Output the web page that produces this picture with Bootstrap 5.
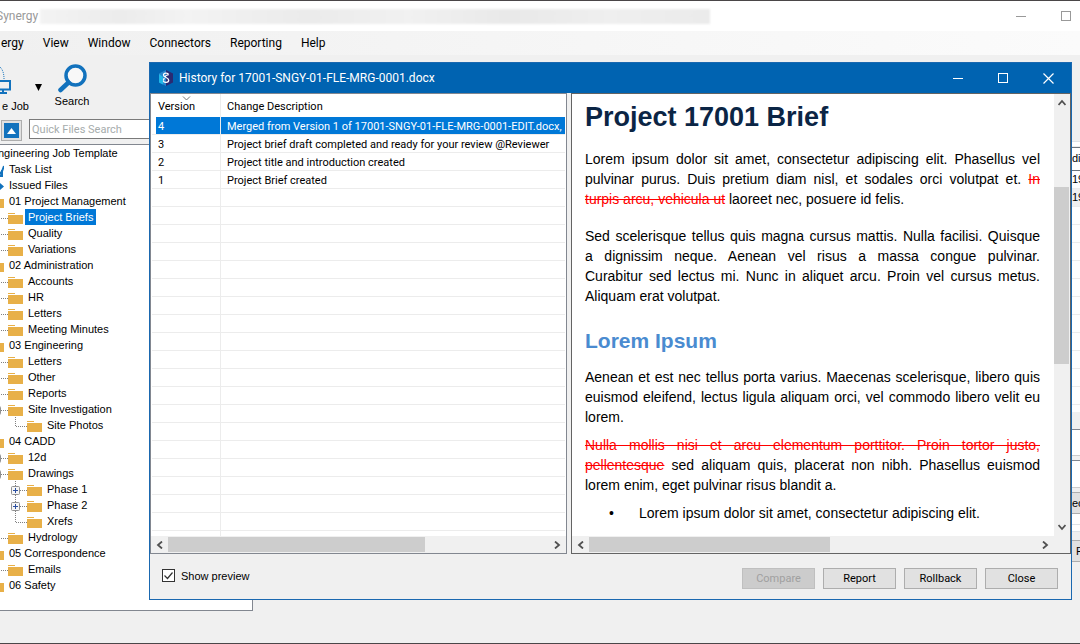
<!DOCTYPE html>
<html lang="en">
<head>
<meta charset="utf-8">
<meta name="viewport" content="width=device-width, initial-scale=1">
<title>Synergy - Document history</title>
<link href="https://cdn.jsdelivr.net/npm/bootstrap@5.3.0/dist/css/bootstrap.min.css" rel="stylesheet">
<style>
  :root { --face: #f0f0f0; --edge: #828790; --accent: #0078d7; --thumb: #cdcdcd; }
  body { font: 11px/16px Roboto, "Liberation Sans", sans-serif; color: #000; background: var(--face); }
  svg { display: block; flex: none; }
  button { font: inherit; color: inherit; border: 0; background: none; padding: 0; }
  .ui-font { font-family: Roboto, "Open Sans", sans-serif; font-size: 12px; }
  .arial-like { font-family: "Liberation Sans", Arial, sans-serif; }
  .app-window { height: 100vh; border-top: 1px solid #4a4648; border-bottom: 1px solid #4a4648; }

  .app-title { height: 30px; background: #fff; color: #999; }
  .app-name { margin-left: -4px; }
  .app-captions { margin-right: -9px; }
  .redacted { flex: 0 1 670px; height: 15px; margin-left: 2px; filter: blur(1px);
    background: linear-gradient(90deg, #f3f3f3, #ececec 12%, #f3f3f3 22%, #ebebeb 40%, #f1f1f1 55%, #e9e9e9 70%, #efefef 85%, #ebebeb); }
  .caption-btn { width: 45px; height: 30px; }
  .app-menu { height: 24px; gap: 19px; padding-left: 1px; background: linear-gradient(90deg, #f0f0f0, #fbfbfb); }
  .app-menu a { color: #000; text-decoration: none; }

  .tools { height: 64px; }
  .tool-job { width: 30px; padding-top: 11px; }
  .tool-job span { padding-left: 2px; }
  .tool-drop { width: 16px; }
  .tool-search { width: 52px; padding-top: 9px; }
  .quick { height: 25px; padding-left: 1px; gap: 7px; }
  .up-btn { width: 21px; height: 21px; margin-top: 1px; border: 1px solid #adadad; background: #e1e1e1; }
  .quick input { width: 222px; height: 20px; border: 1px solid #7a7a7a; padding: 0 2px; background: #fff; }
  .quick input::placeholder { color: #a6acac; opacity: 1; }

  .side { flex: 0 0 253px; padding-bottom: 32px; }
  .tree { background: #fff; border: 1px solid var(--edge); border-left: 0; overflow: hidden; }
  .tree ul { list-style: none; margin: 0; padding: 0; }
  .tree > ul { margin-left: -11px; }
  .tree ul ul ul ul { padding-left: 19px; }
  .tree-row { height: 16px; display: flex; white-space: nowrap; }
  .tree-row > span { padding: 0 3px; margin-left: 2px; height: 16px; }
  .tree-row > .picked { background: var(--accent); color: #fff; }
  .tree-root { margin-left: 4px; }

  .strip { width: 8px; overflow: hidden; white-space: nowrap; }
  .strip .cell { height: 18px; flex: none; background: #fff; border-bottom: 1px solid #ececec; }
  .strip-box { background: #fff; border-top: 1px solid var(--edge); border-bottom: 1px solid #ccc; }
  .strip-btn { background: #e1e1e1; border-top: 1px solid #adadad; border-bottom: 1px solid #adadad; height: 22px; text-align: left; }

  .dialog { position: absolute; top: 62px; left: 149px; right: 8px; bottom: 44px; border: 1px solid #1a68b0; background: var(--face); }
  .dialog-title { height: 30px; gap: 5px; background: #0063b1; color: #fff; padding-left: 8px; }
  .panes { display: grid; grid-template-columns: 417fr 500fr; column-gap: 4px; flex: 1; min-height: 0; }
  .pane { border: 1px solid var(--edge); background: #fff; min-width: 0; min-height: 0; display: flex; flex-direction: column; }
  .list-area { flex: 1; overflow: hidden; margin: 0 1px;
    background: linear-gradient(#ececec, #ececec) 68px 0 / 1px 100% no-repeat,
      repeating-linear-gradient(#fff 0 17px, #ececec 17px 18px) 0 23px no-repeat; }
  .history { table-layout: fixed; width: 100%; border-collapse: separate; border-spacing: 0; }
  .history th { height: 23px; font-weight: 400; padding: 2px 0 0 6px; position: relative; line-height: 16px; }
  .history td { height: 18px; padding: 2px 0 0 6px; line-height: 15px; border-bottom: 1px solid #ececec; white-space: nowrap; overflow: hidden; }
  .history tr > :first-child { width: 69px; border-right: 1px solid #ececec; }
  .history .chosen td { color: #fff; background: var(--accent); background-clip: padding-box; }
  .history .chosen td:first-child { background: linear-gradient(90deg, #fff 4px, var(--accent) 4px) padding-box; }
  .sort-mark { position: absolute; left: 30px; top: 2px; }

  .bar-h { height: 17px; background: var(--face); display: flex; align-items: center; flex: none; }
  .bar-h button { width: 17px; height: 17px; display: grid; place-items: center; }
  .bar-h i { display: block; height: 15px; background: var(--thumb); }
  .bar-v { width: 16px; background: var(--face); display: flex; flex-direction: column; flex: none; }
  .bar-v button { height: 17px; display: grid; place-items: center; }
  .bar-v i { display: block; width: 15px; background: var(--thumb); }
  .list-thumb { width: 62%; } .doc-thumb-h { width: 50%; } .doc-thumb-v { height: 40%; margin-top: 76px; }

  .doc-pane { border-color: #646464; }
  .doc { flex: 1; overflow: hidden; padding: 7px 14px 0 13px; font-size: 14px; line-height: 20px; }
  .doc p { text-align: justify; margin: 0 0 8px; }
  .doc .wide-gap { margin-bottom: 17px; }
  .doc h1 { font-size: 27px; line-height: 32px; font-weight: 700; color: #0b2545; margin: 0 0 16px; }
  .doc h2 { font-size: 21px; line-height: 26px; font-weight: 700; color: #4a8bd0; margin: 22px 0 13px; }
  .doc del { color: #f00; text-decoration: line-through 1px #f00; }
  .doc ul { list-style: none; margin: 0; padding: 0; }
  .doc li { display: flex; }
  .doc li::before { content: "•"; flex: 0 0 54px; padding-left: 24px; }

  .dialog-foot { height: 45px; padding: 0 13px 2px 12px; }
  .tick { appearance: none; width: 13px; height: 13px; margin: 0 6px 0 0; border: 1px solid #333; background: #fff; }
  .tick:checked { background: #fff url("data:image/svg+xml,%3Csvg xmlns='http://www.w3.org/2000/svg' viewBox='0 0 11 11'%3E%3Cpath d='M1.5 5.5l3 3 5-6' fill='none' stroke='%23333' stroke-width='1.2'/%3E%3C/svg%3E"); }
  .cmds { gap: 8px; padding-top: 6px; }
  .cmd { width: 73px; height: 21px; border: 1px solid #adadad; background: #e1e1e1; line-height: 18px; }
  .cmd:disabled { background: #ccc; border-color: #bfbfbf; color: #a0a0a0; }
</style>
</head>
<body>
<svg width="0" height="0" class="position-absolute" aria-hidden="true">
  <symbol id="folder" viewBox="0 0 15 16"><path d="M0 4h7v1H0zM0 6h15v9H0z" fill="#e8b048"/></symbol>
  <symbol id="twig" viewBox="0 0 19 16"><path d="M7.500 0v10M8 9.500h11" stroke="#808080" stroke-dasharray="1 1" fill="none"/></symbol>
  <symbol id="twig-plus" viewBox="0 0 19 16"><path d="M7.500 0v16M12 9.500h7" stroke="#808080" stroke-dasharray="1 1" fill="none"/><rect x="3.500" y="5.500" width="8" height="8" rx="1" fill="#f6f6f6" stroke="#919191"/><path d="M5 9.500h5M7.500 7v5" stroke="#2b4fa0"/></symbol>
  <symbol id="left" viewBox="0 0 7 8"><path d="M6 .5L2 4l4 3.500" fill="none" stroke="#505050" stroke-width="1.800"/></symbol>
  <symbol id="right" viewBox="0 0 7 8"><path d="M1 .5L5 4 1 7.500" fill="none" stroke="#505050" stroke-width="1.800"/></symbol>
  <symbol id="up" viewBox="0 0 8 7"><path d="M.5 6L4 2l3.500 4" fill="none" stroke="#505050" stroke-width="1.800"/></symbol>
  <symbol id="down" viewBox="0 0 8 7"><path d="M.5 1L4 5l3.500-4" fill="none" stroke="#505050" stroke-width="1.800"/></symbol>
</svg>

<div class="app-window d-flex flex-column position-relative overflow-hidden">
  <header class="app-title ui-font d-flex align-items-center">
    <span class="app-name">Synergy</span>
    <div class="redacted"></div>
    <div class="app-captions d-flex ms-auto">
      <button class="caption-btn d-grid align-items-center justify-content-center" aria-label="Minimize"><svg width="11" height="11"><path d="M0 5.500h10" stroke="#999"/></svg></button>
      <button class="caption-btn d-grid align-items-center justify-content-center" aria-label="Maximize"><svg width="11" height="11"><rect x=".5" y=".5" width="9" height="9" fill="none" stroke="#999"/></svg></button>
    </div>
  </header>
  <nav class="app-menu ui-font d-flex align-items-center" aria-label="Main menu">
    <a href="#">ergy</a><a href="#">View</a><a href="#">Window</a><a href="#">Connectors</a><a href="#">Reporting</a><a href="#">Help</a>
  </nav>

  <div class="d-flex flex-fill overflow-hidden">
    <aside class="side d-flex flex-column">
      <div class="tools d-flex arial-like">
        <button class="tool-job d-flex flex-column align-items-start text-nowrap">
          <svg width="12" height="32" viewBox="0 0 12 32"><path d="M0 1c3 3 4 7 4 12" fill="none" stroke="#1272bd" stroke-dasharray="1 1"/><path d="M-1 15h11v8.500H-1" fill="none" stroke="#1272bd" stroke-width="2"/><path d="M3 24v3M0 27h7" fill="none" stroke="#1272bd" stroke-width="2"/></svg>
          <span>e Job</span>
        </button>
        <button class="tool-drop d-grid align-items-center justify-content-center" aria-label="More jobs"><svg width="7" height="7"><path d="M0 0h7L3.500 7z"/></svg></button>
        <button class="tool-search d-flex flex-column align-items-center">
          <svg width="29" height="29" viewBox="0 0 29 29"><circle cx="17.500" cy="11.500" r="9.500" fill="#f8f8f8" stroke="#1272bd" stroke-width="3.500"/><path d="M10.500 18.500L2.500 26" stroke="#1272bd" stroke-width="4.500" stroke-linecap="round"/></svg>
          <span>Search</span>
        </button>
      </div>
      <div class="quick d-flex">
        <button class="up-btn d-grid align-items-center justify-content-center" aria-label="Up one level"><svg width="15" height="15"><path fill="#1272bd" d="M0 0h15v15H0z"/><path fill="#fff" d="M3 11l4.500-6 4.500 6z"/></svg></button>
        <input type="text" placeholder="Quick Files Search" aria-label="Quick Files Search">
      </div>
      <nav class="tree flex-fill arial-like" aria-label="Job folders">
        <ul>
          <li><div class="tree-row tree-root"><span>ngineering Job Template</span></div>
            <ul>
              <li class="tree-row"><svg width="15" height="16"><path d="M9 9l3 4 3-8M10 15h3V9" fill="none" stroke="#1272bd" stroke-width="2"/></svg><span>Task List</span></li>
              <li class="tree-row"><svg width="15" height="16"><path d="M8 8h3V6l4 3.500-4 3.500v-2H8z" fill="#1272bd"/></svg><span>Issued Files</span></li>
              <li><div class="tree-row"><svg width="15" height="16"><use href="#folder"/></svg><span>01 Project Management</span></div>
                <ul>
                  <li class="tree-row"><svg width="19" height="16"><use href="#twig"/></svg><svg width="15" height="16"><use href="#folder"/></svg><span class="picked">Project Briefs</span></li>
                  <li class="tree-row"><svg width="19" height="16"><use href="#twig"/></svg><svg width="15" height="16"><use href="#folder"/></svg><span>Quality</span></li>
                  <li class="tree-row"><svg width="19" height="16"><use href="#twig"/></svg><svg width="15" height="16"><use href="#folder"/></svg><span>Variations</span></li>
                </ul></li>
              <li><div class="tree-row"><svg width="15" height="16"><use href="#folder"/></svg><span>02 Administration</span></div>
                <ul>
                  <li class="tree-row"><svg width="19" height="16"><use href="#twig"/></svg><svg width="15" height="16"><use href="#folder"/></svg><span>Accounts</span></li>
                  <li class="tree-row"><svg width="19" height="16"><use href="#twig"/></svg><svg width="15" height="16"><use href="#folder"/></svg><span>HR</span></li>
                  <li class="tree-row"><svg width="19" height="16"><use href="#twig"/></svg><svg width="15" height="16"><use href="#folder"/></svg><span>Letters</span></li>
                  <li class="tree-row"><svg width="19" height="16"><use href="#twig"/></svg><svg width="15" height="16"><use href="#folder"/></svg><span>Meeting Minutes</span></li>
                </ul></li>
              <li><div class="tree-row"><svg width="15" height="16"><use href="#folder"/></svg><span>03 Engineering</span></div>
                <ul>
                  <li class="tree-row"><svg width="19" height="16"><use href="#twig"/></svg><svg width="15" height="16"><use href="#folder"/></svg><span>Letters</span></li>
                  <li class="tree-row"><svg width="19" height="16"><use href="#twig"/></svg><svg width="15" height="16"><use href="#folder"/></svg><span>Other</span></li>
                  <li class="tree-row"><svg width="19" height="16"><use href="#twig"/></svg><svg width="15" height="16"><use href="#folder"/></svg><span>Reports</span></li>
                  <li><div class="tree-row"><svg width="19" height="16"><use href="#twig-plus"/></svg><svg width="15" height="16"><use href="#folder"/></svg><span>Site Investigation</span></div>
                    <ul>
                      <li class="tree-row"><svg width="19" height="16"><use href="#twig"/></svg><svg width="15" height="16"><use href="#folder"/></svg><span>Site Photos</span></li>
                    </ul></li>
                </ul></li>
              <li><div class="tree-row"><svg width="15" height="16"><use href="#folder"/></svg><span>04 CADD</span></div>
                <ul>
                  <li class="tree-row"><svg width="19" height="16"><use href="#twig-plus"/></svg><svg width="15" height="16"><use href="#folder"/></svg><span>12d</span></li>
                  <li><div class="tree-row"><svg width="19" height="16"><use href="#twig-plus"/></svg><svg width="15" height="16"><use href="#folder"/></svg><span>Drawings</span></div>
                    <ul>
                      <li class="tree-row"><svg width="19" height="16"><use href="#twig-plus"/></svg><svg width="15" height="16"><use href="#folder"/></svg><span>Phase 1</span></li>
                      <li class="tree-row"><svg width="19" height="16"><use href="#twig-plus"/></svg><svg width="15" height="16"><use href="#folder"/></svg><span>Phase 2</span></li>
                      <li class="tree-row"><svg width="19" height="16"><use href="#twig"/></svg><svg width="15" height="16"><use href="#folder"/></svg><span>Xrefs</span></li>
                    </ul></li>
                  <li class="tree-row"><svg width="19" height="16"><use href="#twig"/></svg><svg width="15" height="16"><use href="#folder"/></svg><span>Hydrology</span></li>
                </ul></li>
              <li><div class="tree-row"><svg width="15" height="16"><use href="#folder"/></svg><span>05 Correspondence</span></div>
                <ul>
                  <li class="tree-row"><svg width="19" height="16"><use href="#twig"/></svg><svg width="15" height="16"><use href="#folder"/></svg><span>Emails</span></li>
                </ul></li>
              <li class="tree-row"><svg width="15" height="16"><use href="#folder"/></svg><span>06 Safety</span></li>
            </ul></li>
        </ul>
      </nav>
    </aside>

    <section class="strip arial-like ms-auto d-flex flex-column" aria-label="Job files">
      <div class="border-bottom" style="flex:0 0 87px"></div>
      <div class="cell" style="height:5px"></div>
      <div class="cell border-top border-secondary" style="height:24px;line-height:21px">di</div>
      <div class="cell">19</div>
      <div class="cell" style="background:#f0f0f0">19</div>
      <div class="cell"></div><div class="cell"></div><div class="cell"></div><div class="cell"></div><div class="cell"></div><div class="cell"></div>
      <div class="cell"></div><div class="cell"></div><div class="cell"></div><div class="cell"></div><div class="cell"></div>
      <div class="bg-white" style="flex:0 0 7px"></div>
      <div style="flex:0 0 17px"></div>
      <div class="strip-box" style="flex:0 0 27px"></div>
      <div style="flex:0 0 4px"></div>
      <div class="strip-box" style="flex:0 0 28px"></div>
      <div style="flex:0 0 4px"></div>
      <button class="strip-btn flex-shrink-0">ec</button>
      <div class="bg-white border-bottom" style="flex:0 0 11px"></div>
      <div class="bg-white border-bottom" style="flex:0 0 7px"></div>
      <div style="flex:0 0 8px"></div>
      <button class="strip-btn flex-shrink-0 ps-1">P</button>
    </section>
  </div>
</div>

<div class="dialog d-flex flex-column" role="dialog" aria-labelledby="dlg-title">
  <div class="dialog-title ui-font d-flex align-items-center flex-shrink-0">
    <svg width="16" height="16" viewBox="0 0 16 16"><path d="M8 0l7 3.500v9L8 16z" fill="#2a2a72"/><path d="M8 0L1 3.500v9L8 16z" fill="#2584cc"/><path d="M1 4l4 3v7.500L1 12.500z" fill="#1fb6e8"/><path d="M10.500 4.500C10 2.500 5.500 2.500 5.500 5c0 3 5.200 2 5.200 5.200 0 2.600-4.800 2.800-5.400.6M10.500 5C8 4.500 5.500 8 5.500 10.500" fill="none" stroke="#fff" stroke-width="1.300"/></svg>
    <span id="dlg-title" class="text-nowrap">History for 17001-SNGY-01-FLE-MRG-0001.docx</span>
    <div class="d-flex ms-auto">
      <button class="caption-btn d-grid align-items-center justify-content-center" aria-label="Minimize"><svg width="11" height="11"><path d="M0 5.500h10" stroke="#fff"/></svg></button>
      <button class="caption-btn d-grid align-items-center justify-content-center" aria-label="Maximize"><svg width="11" height="11"><rect x=".5" y=".5" width="9" height="9" fill="none" stroke="#fff"/></svg></button>
      <button class="caption-btn d-grid align-items-center justify-content-center" aria-label="Close window"><svg width="11" height="11"><path d="M.5.5l10 10M10.500.5l-10 10" stroke="#fff" stroke-width="1.200"/></svg></button>
    </div>
  </div>

  <div class="panes">
    <section class="pane">
      <div class="list-area">
        <table class="history">
          <thead><tr><th scope="col">Version<svg class="sort-mark" width="9" height="5"><path d="M1 .5l3.500 3.500L8 .5" fill="none" stroke="#777"/></svg></th><th scope="col">Change Description</th></tr></thead>
          <tbody>
            <tr class="chosen"><td>4</td><td>Merged from Version 1 of 17001-SNGY-01-FLE-MRG-0001-EDIT.docx,</td></tr>
            <tr><td>3</td><td>Project brief draft completed and ready for your review @Reviewer</td></tr>
            <tr><td>2</td><td>Project title and introduction created</td></tr>
            <tr><td>1</td><td>Project Brief created</td></tr>
          </tbody>
        </table>
      </div>
      <div class="bar-h">
        <button aria-label="Scroll list left"><svg width="7" height="8"><use href="#left"/></svg></button>
        <i class="list-thumb"></i>
        <button class="ms-auto" aria-label="Scroll list right"><svg width="7" height="8"><use href="#right"/></svg></button>
      </div>
    </section>

    <section class="pane doc-pane">
      <div class="d-flex flex-fill overflow-hidden">
        <article class="doc arial-like">
          <h1>Project 17001 Brief</h1>
          <p class="wide-gap">Lorem ipsum dolor sit amet, consectetur adipiscing elit. Phasellus vel pulvinar purus. Duis pretium diam nisl, et sodales orci volutpat et. <del>In turpis arcu, vehicula ut</del> laoreet nec, posuere id felis.</p>
          <p>Sed scelerisque tellus quis magna cursus mattis. Nulla facilisi. Quisque a&nbsp;dignissim neque. Aenean vel risus a massa congue pulvinar. Curabitur&nbsp;sed lectus mi. Nunc in aliquet arcu. Proin vel cursus metus. Aliquam erat volutpat.</p>
          <h2>Lorem Ipsum</h2>
          <p>Aenean et est nec tellus porta varius. Maecenas scelerisque, libero quis euismod eleifend, lectus ligula aliquam orci, vel commodo libero velit eu lorem.</p>
          <p><del>Nulla mollis nisi et arcu elementum porttitor. Proin tortor justo, pellentesque</del> sed aliquam quis, placerat non nibh. Phasellus euismod lorem enim, eget pulvinar risus blandit a.</p>
          <ul><li>Lorem ipsum dolor sit amet, consectetur adipiscing elit.</li></ul>
        </article>
        <div class="bar-v">
          <button aria-label="Scroll preview up"><svg width="8" height="7"><use href="#up"/></svg></button>
          <i class="doc-thumb-v"></i>
          <button class="mt-auto" aria-label="Scroll preview down"><svg width="8" height="7"><use href="#down"/></svg></button>
        </div>
      </div>
      <div class="bar-h pe-3">
        <button aria-label="Scroll preview left"><svg width="7" height="8"><use href="#left"/></svg></button>
        <i class="doc-thumb-h"></i>
        <button class="ms-auto" aria-label="Scroll preview right"><svg width="7" height="8"><use href="#right"/></svg></button>
      </div>
    </section>
  </div>

  <footer class="dialog-foot d-flex align-items-center flex-shrink-0">
    <input class="tick" type="checkbox" id="preview" checked>
    <label for="preview" class="arial-like me-auto">Show preview</label>
    <div class="cmds d-flex">
      <button class="cmd" disabled>Compare</button>
      <button class="cmd">Report</button>
      <button class="cmd">Rollback</button>
      <button class="cmd">Close</button>
    </div>
  </footer>
</div>
<script src="https://cdn.jsdelivr.net/npm/bootstrap@5.3.0/dist/js/bootstrap.bundle.min.js"></script>
</body>
</html>
